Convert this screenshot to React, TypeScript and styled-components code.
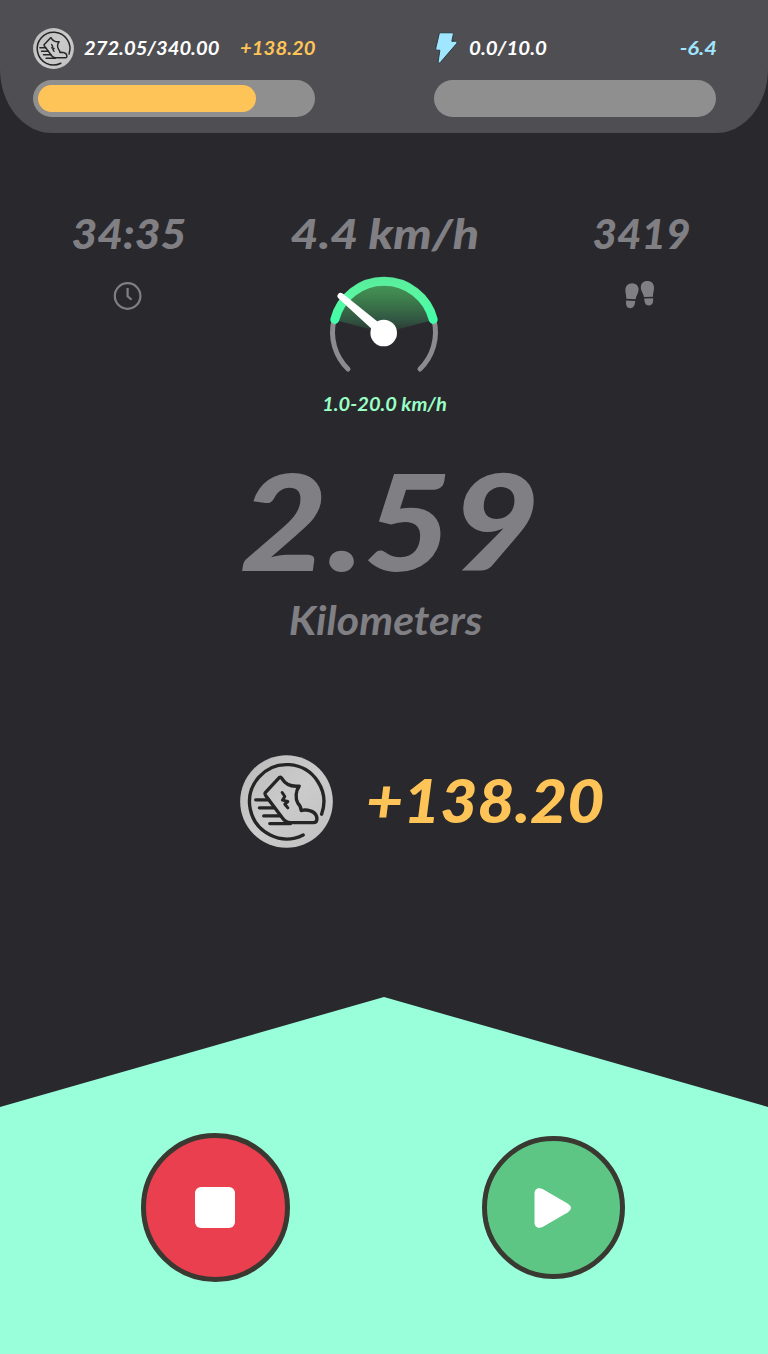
import React from "react";
import styled, { createGlobalStyle } from "styled-components";

const GlobalStyle = createGlobalStyle`
  *, *::before, *::after { box-sizing: border-box; }
  body { margin: 0; background: #29282d; }
  svg { display: block; flex: none; }
`;

const Screen = styled.main`
  display: flex;
  flex-direction: column;
  width: 768px;
  height: 1354px;
  overflow: hidden;
  background: #29282d;
  color: #807f84;
  font-family: Lato, "Liberation Sans", sans-serif;
  font-style: italic;
`;

const Header = styled.header`
  display: flex;
  justify-content: space-between;
  height: 133px;
  padding: 27px 52px 0 33px;
  background: #4f4e53;
  border-radius: 0 0 52px 52px / 0 0 64px 64px;
`;

const Meter = styled.section`
  width: 282px;
`;

const MeterRow = styled.div`
  display: flex;
  align-items: center;
  height: 42px;
  margin-bottom: 10.5px;
`;

const Label = styled.span<{ $size: number; $weight?: number; $stretch?: number; $color?: string; $from?: string }>`
  display: block;
  white-space: nowrap;
  font-size: ${(p) => p.$size}px;
  line-height: 1;
  font-weight: ${(p) => p.$weight ?? 700};
  color: ${(p) => p.$color ?? "inherit"};
  transform: scaleX(${(p) => p.$stretch ?? 1});
  transform-origin: ${(p) => p.$from ?? "center"};
`;

const MeterValue = styled.div<{ $gap: number }>`
  margin-left: ${(p) => p.$gap}px;
  margin-right: auto;
`;

const MeterDelta = styled.div`
  margin-right: -1px;
`;

const Track = styled.div`
  height: 37px;
  padding: 5px;
  border-radius: 19px;
  background: #8f8f8f;
`;

const Fill = styled.div`
  height: 27px;
  border-radius: 13.5px;
  background: #ffc457;
`;

const Stats = styled.section`
  display: grid;
  grid-template-columns: repeat(3, 1fr);
  height: 287px;
  padding-top: 80px;
`;

const Stat = styled.div`
  display: flex;
  flex-direction: column;
  align-items: center;
`;

const StatValue = styled.div<{ $inset?: number }>`
  display: flex;
  align-items: center;
  height: 40px;
  padding-left: ${(p) => p.$inset ?? 0}px;
`;

const StatIcon = styled.div<{ $gap: number }>`
  margin-top: ${(p) => p.$gap}px;
`;

const SpeedRange = styled.div`
  margin-top: 19px;
  padding-left: 2px;
`;

const Distance = styled.section`
  display: flex;
  flex-direction: column;
  align-items: center;
  height: 335px;
  padding-top: 33px;
`;

const DistanceValue = styled.div`
  padding-left: 11px;
`;

const DistanceUnit = styled.div`
  margin-top: 13px;
  padding-left: 3px;
`;

const Earned = styled.section`
  display: flex;
  align-items: center;
  height: 92px;
  padding-left: 240px;
`;

const EarnedValue = styled.div`
  margin: 0 0 2px 33px;
`;

const Controls = styled.footer`
  display: flex;
  align-items: center;
  justify-content: center;
  gap: 192px;
  height: 357px;
  margin-top: auto;
  padding: 64px 3px 0 0;
  background: #99ffdb;
  clip-path: polygon(50% 0, 100% 110px, 100% 100%, 0 100%, 0 110px);
`;

const RoundButton = styled.button<{ $size: number; $fill: string }>`
  display: flex;
  align-items: center;
  justify-content: center;
  width: ${(p) => p.$size}px;
  height: ${(p) => p.$size}px;
  padding: 0;
  border: 5px solid #393931;
  border-radius: 50%;
  background: ${(p) => p.$fill};
`;

const Coin = ({ size }: { size: number }) => (
  <svg width={size} height={size} viewBox="30 42 278 278" fill="none" stroke="#252525" strokeWidth="10" strokeLinecap="round" strokeLinejoin="round">
    <defs>
      <linearGradient id="silver" x1="0" y1="0" x2="1" y2="1">
        <stop offset="0" stopColor="#b9b9b9" />
        <stop offset=".5" stopColor="#cbcbcb" />
        <stop offset="1" stopColor="#c0c0c0" />
      </linearGradient>
    </defs>
    <circle cx="169" cy="181" r="138.5" fill="url(#silver)" stroke="none" />
    <path d="M274 219 A111 111 0 1 0 219 281" />
    <path d="M148 109 L105 155 Q103 159 107 164 L158 232 Q167 244 181 244 H249 Q260 244 260 233 Q259 208 224 206 L213 208 Q212 194 203 186 C195 172 196 149 207 135 Q171 139 155 112 Q152 106 148 109Z" />
    <path d="M77 176H116M88 200H133M101 224H151M119 247H181" />
    <path d="M156 154L164 166L157 177L173 181L164 189L173 200" strokeWidth="9" />
  </svg>
);

const Bolt = () => (
  <svg width="24" height="34" viewBox="0 0 24 34">
    <path d="M6.4 1.8H18.2Q19.6 1.8 19.3 3.2L17.8 10.3H21.8Q24 10.6 22.6 12.6L6 31.8Q4.2 33.2 4.1 31L5.9 19.2H3Q1.3 19 1.8 17.2L5.2 2.8Q5.5 1.8 6.4 1.8Z" fill="#a1e6ff" stroke="#26333a" strokeWidth=".9" />
  </svg>
);

const Clock = () => (
  <svg width="30" height="30" viewBox="0 0 30 30" fill="none" stroke="#807f84" strokeWidth="2.2">
    <circle cx="14.6" cy="15" r="12.8" />
    <path d="M14.6 7V15.2L18.6 18.8" />
  </svg>
);

const Footprints = () => (
  <svg width="32" height="30" viewBox="0 0 32 30" fill="#807f84">
    <path d="M2.3 18.7C2.5 15.5 1.2 13 1.4 9.7C1.7 5.5 4.4 3.4 8 3.3C12 3.3 14.6 6.2 14.6 9.5C14.6 13 12 15.8 11.6 19.3Z" />
    <path d="M2.2 20.5L11.2 21C11 25.4 9.3 28.2 6.2 28.2C3.3 28.2 1.4 26 2.2 20.5Z" />
    <path d="M19.9 17C19.6 13.3 16.9 11.5 16.8 7.4C16.7 3.7 19.3 1 23.2 1C27.6 1 29.9 3.7 30 7.7C30.1 11 28.7 13.6 29 16.7Z" />
    <path d="M20.2 18.6L29 18.3C29.6 22.9 28.1 25.3 25 25.5C21.8 25.7 20.5 23.5 20.2 18.6Z" />
  </svg>
);

const Dial = styled.div`
  margin-top: 22px;
`;

const Speedometer = () => (
  <svg width="116" height="100" viewBox="326 275 116 100" fill="none" strokeLinecap="round">
    <defs>
      <linearGradient id="fan" gradientUnits="userSpaceOnUse" x1="0" y1="280" x2="0" y2="333">
        <stop offset="0" stopColor="#489c59" />
        <stop offset=".35" stopColor="#3d7f4d" />
        <stop offset=".75" stopColor="#315642" />
        <stop offset="1" stopColor="#2a332f" />
      </linearGradient>
      <linearGradient id="band" gradientUnits="userSpaceOnUse" x1="0" y1="277" x2="0" y2="323">
        <stop offset="0" stopColor="#56eb9a" />
        <stop offset=".35" stopColor="#5bf5a1" />
        <stop offset="1" stopColor="#41ffa9" />
      </linearGradient>
    </defs>
    <path d="M384 333L335 320A51 51 0 0 1 433 320Z" fill="url(#fan)" />
    <path d="M348 369A51.3 51.3 0 0 1 334 320M420 369A51.3 51.3 0 0 0 434 320" stroke="#8c8b90" strokeWidth="5" />
    <path d="M334.8 319.5A50.8 50.8 0 0 1 433.2 319.5" stroke="url(#band)" strokeWidth="9" />
    <path d="M342.6 293.6L388 330L381 337.5L338.6 298.4A3.1 3.1 0 0 1 342.6 293.6Z" fill="#fff" />
    <circle cx="383.7" cy="333" r="13.3" fill="#fff" />
  </svg>
);

const StopGlyph = () => (
  <svg width="40" height="41" viewBox="0 0 40 41">
    <rect width="40" height="41" rx="6" fill="#fff" />
  </svg>
);

const PlayGlyph = () => (
  <svg width="40" height="42" viewBox="0 0 40 42">
    <path d="M1.5 6.5C1.5 1.5 6 0 10 2.3L35 16.8Q41 21 35 25.2L10 39.7C6 42 1.5 40.5 1.5 35.5Z" fill="#fff" />
  </svg>
);

export default function App() {
  return (
    <>
      <GlobalStyle />
      <Screen>
        <Header>
          <Meter>
            <MeterRow>
              <Coin size={41} />
              <MeterValue $gap={10}>
                <Label $size={19.5} $color="#fff" $stretch={1.035} $from="left">272.05/340.00</Label>
              </MeterValue>
              <MeterDelta>
                <Label $size={19.5} $color="#ffc457" $stretch={1.04} $from="right">+138.20</Label>
              </MeterDelta>
            </MeterRow>
            <Track>
              <Fill style={{ width: `${(272.05 / 340) * 100}%` }} />
            </Track>
          </Meter>
          <Meter>
            <MeterRow>
              <Bolt />
              <MeterValue $gap={11}>
                <Label $size={19.5} $color="#fff" $stretch={1.05} $from="left">0.0/10.0</Label>
              </MeterValue>
              <MeterDelta>
                <Label $size={19.5} $color="#a1e6ff" $stretch={1.13} $from="right">-6.4</Label>
              </MeterDelta>
            </MeterRow>
            <Track />
          </Meter>
        </Header>

        <Stats>
          <Stat>
            <StatValue $inset={1}><Label $size={41} $weight={900} $stretch={1.085}>34:35</Label></StatValue>
            <StatIcon $gap={28}><Clock /></StatIcon>
          </Stat>
          <Stat>
            <StatValue $inset={1}><Label $size={41} $weight={900} $stretch={1.18}>4.4 km/h</Label></StatValue>
            <Dial><Speedometer /></Dial>
            <SpeedRange><Label $size={19.5} $color="#98ffc5" $stretch={1.03}>1.0-20.0 km/h</Label></SpeedRange>
          </Stat>
          <Stat>
            <StatValue $inset={4}><Label $size={41} $weight={900} $stretch={1.03}>3419</Label></StatValue>
            <StatIcon $gap={27}><Footprints /></StatIcon>
          </Stat>
        </Stats>

        <Distance>
          <DistanceValue><Label $size={134} $weight={900} $stretch={1.13}>2.59</Label></DistanceValue>
          <DistanceUnit><Label $size={40} $stretch={1.07}>Kilometers</Label></DistanceUnit>
        </Distance>

        <Earned>
          <Coin size={93} />
          <EarnedValue><Label $size={60} $weight={900} $color="#ffc457" $stretch={1.068} $from="left">+138.20</Label></EarnedValue>
        </Earned>

        <Controls>
          <RoundButton $size={149} $fill="#ea3f4e" aria-label="Stop"><StopGlyph /></RoundButton>
          <RoundButton $size={143} $fill="#5dc685" aria-label="Resume"><PlayGlyph /></RoundButton>
        </Controls>
      </Screen>
    </>
  );
}
